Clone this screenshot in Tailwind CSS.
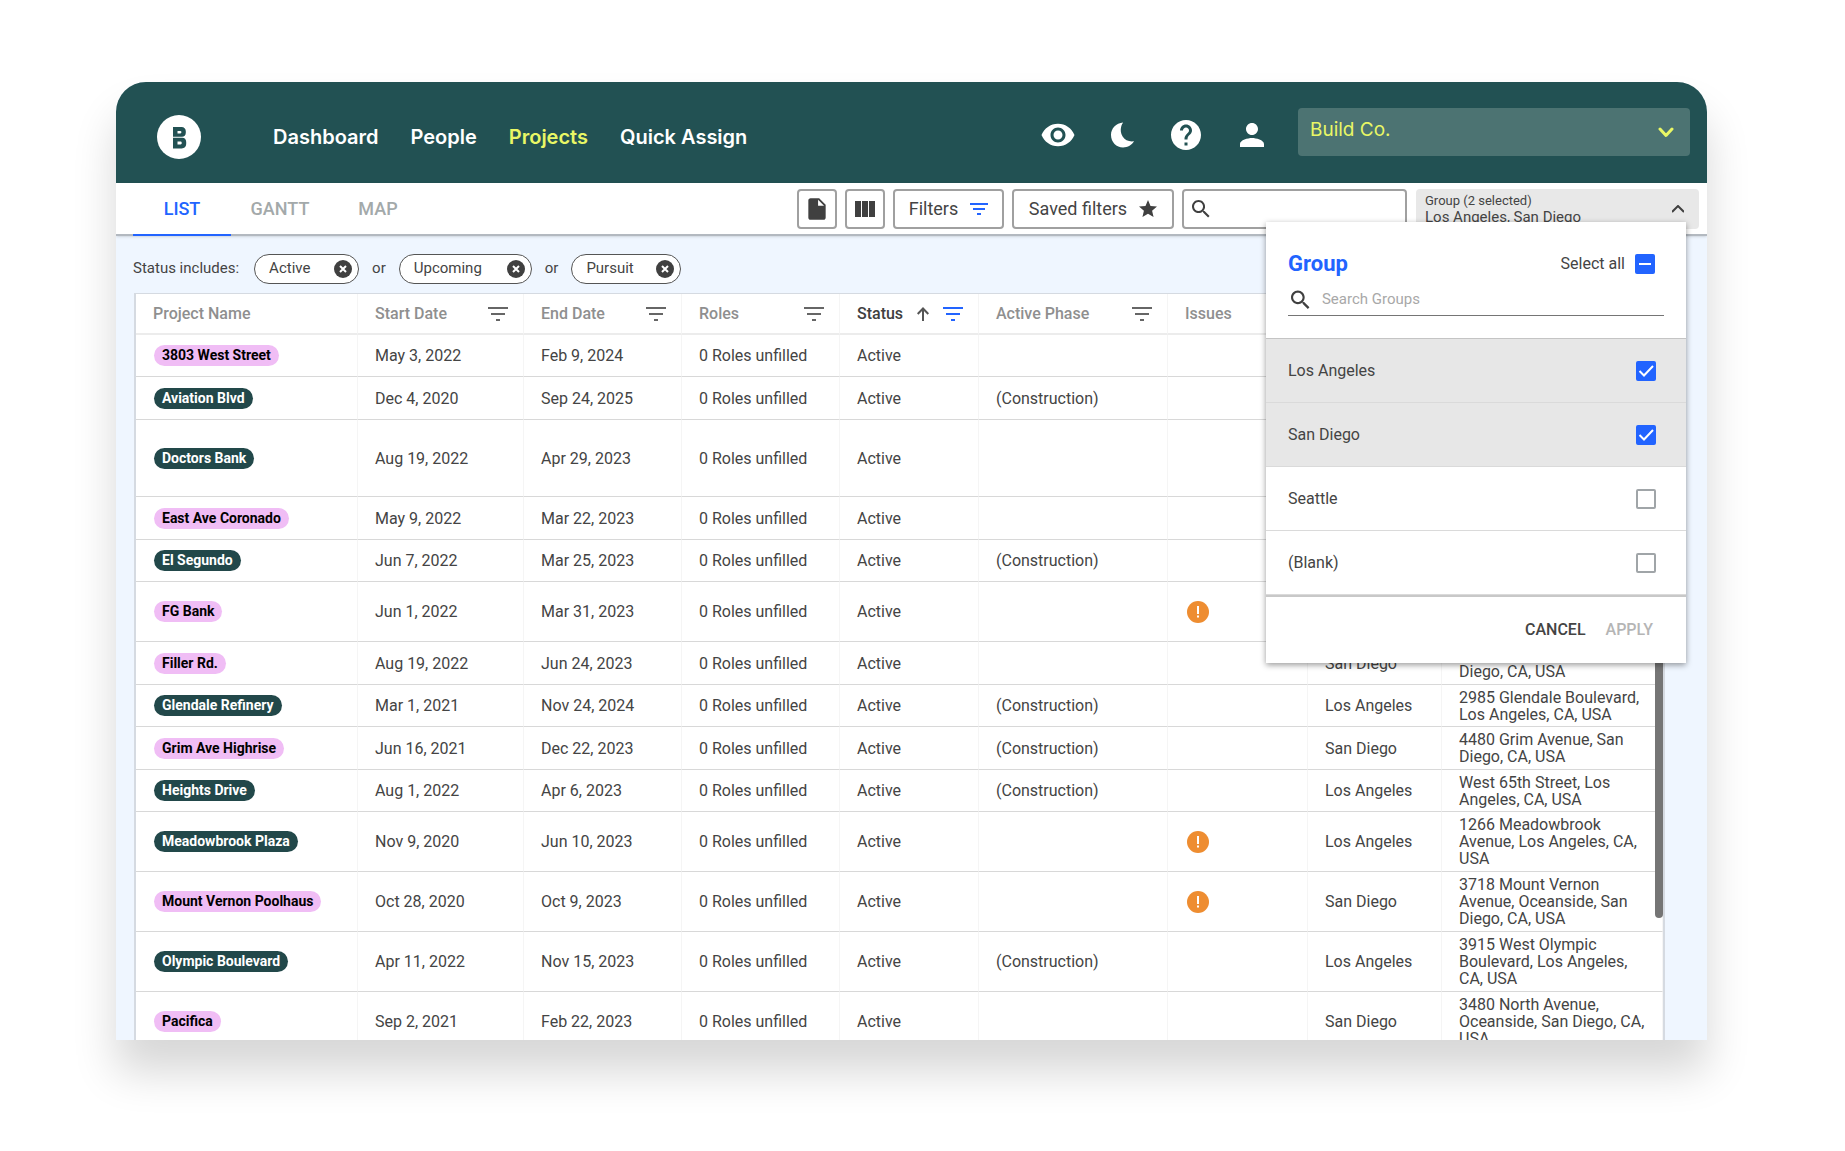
<!DOCTYPE html>
<html lang="en">
<head>
    <meta charset="UTF-8">
    <meta name="viewport" content="width=device-width, initial-scale=1.0">
    <title>Projects | Build Co.</title>
    <script src="https://cdn.jsdelivr.net/npm/@tailwindcss/browser@4"></script>
</head>
<body class="bg-white font-[Roboto,sans-serif] text-[#444]">

    <div class="flex h-screen pt-[82px] pr-[138px] pb-[111px] pl-[116px]">
        <div class="flex min-w-0 flex-1 flex-col overflow-hidden rounded-t-[30px] bg-[#eff6ff] shadow-[0_32px_44px_rgba(0,0,0,0.16)]">

            <!-- Top bar -->
            <header class="flex h-[101px] shrink-0 items-center bg-[#225153] pt-2 pr-[17px] pl-[41px]">
                <a href="#" aria-label="Home" class="mr-[72px]">
                    <svg class="size-11" viewBox="0 0 44 44">
                        <circle cx="22" cy="22" r="22" fill="#fff"/>
                        <path fill="#225153" fill-rule="evenodd" d="M16 12h8.500c2.600 0 4.300 1.700 4.300 4.200v1.600c0 2.400-1.600 4-3.800 4h-9zM20.500 16v2.400h2.800c1.500 0 1.500-2.400 0-2.400zM16 22.800h9.200c2.400 0 4 1.600 4 4.100v2.100c0 2.600-1.800 4.400-4.500 4.400H16zM20.500 26.600v2.900h3c1.700 0 1.700-2.900 0-2.900z"/>
                    </svg>
                </a>
                <nav class="flex flex-1 gap-8 font-[Inter,sans-serif] text-xl font-semibold text-white">
                    <a href="#">Dashboard</a>
                    <a href="#">People</a>
                    <a href="#" class="text-[#e9f765]">Projects</a>
                    <a href="#">Quick Assign</a>
                </nav>
                <div class="-mt-1 flex items-center gap-[30px] text-white">
                    <button aria-label="Watch"><svg class="size-9" viewBox="0 0 24 24" fill="currentColor"><path d="M12 4.500C7 4.500 2.730 7.610 1 12c1.730 4.390 6 7.500 11 7.500s9.270-3.110 11-7.500c-1.730-4.390-6-7.500-11-7.500zM12 17c-2.760 0-5-2.240-5-5s2.240-5 5-5 5 2.240 5 5-2.240 5-5 5zm0-8c-1.660 0-3 1.340-3 3s1.340 3 3 3 3-1.340 3-3-1.340-3-3-3z"/></svg></button>
                    <button aria-label="Dark mode"><svg class="size-8" viewBox="-2 -2 32 32" fill="currentColor"><path d="M15.200 1.500C8 2 3 7.500 3 14c0 7 5.500 12.500 12 12.500 4.800 0 9-2.600 11-6.200-5 .700-9-1.200-11.200-4.500-2.800-4.300-2.700-10.300.400-14.300z"/></svg></button>
                    <button aria-label="Help"><svg class="size-9" viewBox="0 0 24 24" fill="currentColor"><path d="M12 2C6.480 2 2 6.480 2 12s4.480 10 10 10 10-4.480 10-10S17.520 2 12 2zm1 17h-2v-2h2v2zm2.070-7.750l-.9.920C13.450 12.900 13 13.500 13 15h-2v-.5c0-1.100.45-2.100 1.170-2.830l1.240-1.260c.37-.36.590-.86.590-1.410 0-1.100-.9-2-2-2s-2 .9-2 2H8c0-2.210 1.790-4 4-4s4 1.790 4 4c0 .88-.36 1.680-.93 2.250z"/></svg></button>
                    <button aria-label="Account"><svg class="size-9" viewBox="0 0 24 24" fill="currentColor"><path d="M12 12c2.210 0 4-1.790 4-4s-1.790-4-4-4-4 1.790-4 4 1.790 4 4 4zm0 2c-2.670 0-8 1.340-8 4v2h16v-2c0-2.660-5.330-4-8-4z"/></svg></button>
                </div>
                <div class="relative -mt-2.5 ml-7">
                    <select aria-label="Company" class="h-12 w-[392px] appearance-none rounded bg-[#4c7372] px-3 pb-0.5 font-[Inter,sans-serif] text-[19px] text-[#e9f765]">
                        <option>Build Co.</option>
                    </select>
                    <svg class="pointer-events-none absolute top-4 right-4 size-4" viewBox="0 0 16 16" fill="none" stroke="#e9f765" stroke-width="3" stroke-linecap="round" stroke-linejoin="round"><path d="M2 5l6 6.500L14 5"/></svg>
                </div>
            </header>

            <!-- View tabs and tools -->
            <div class="relative z-10 flex h-[53px] shrink-0 items-start border-b-2 border-[#b3b9c0] bg-white pr-2 pl-[17px] shadow-sm">
                <nav class="flex flex-1 text-lg font-medium text-[#a3a9aa]">
                    <a href="#" class="flex h-[53px] w-[98px] items-center justify-center border-b-2 border-[#2264ff] text-[#2264ff]">LIST</a>
                    <a href="#" class="flex h-[53px] w-[98px] items-center justify-center pb-0.5">GANTT</a>
                    <a href="#" class="flex h-[53px] w-[98px] items-center justify-center pb-0.5">MAP</a>
                </nav>
                <div class="flex gap-2 pt-[6px] text-lg">
                    <button aria-label="Export" class="flex size-10 items-center justify-center rounded border-2 border-[#a0a0a0]"><svg class="size-[26px]" viewBox="0 0 24 24" fill="#404040"><path d="M6 2c-1.100 0-2 .9-2 2v16c0 1.100.9 2 2 2h12c1.100 0 2-.9 2-2V8l-6-6H6zm7 7V3.500L18.500 9H13z"/></svg></button>
                    <button aria-label="Columns" class="flex size-10 items-center justify-center rounded border-2 border-[#a0a0a0]"><svg class="h-4 w-5" viewBox="0 0 20 16" fill="#404040"><path d="M0 0h6v16H0zM7 0h6v16H7zM14 0h6v16h-6z"/></svg></button>
                    <button class="flex h-10 w-[111px] items-center justify-center gap-3 rounded border-2 border-[#a0a0a0]">Filters <svg class="h-3 w-[18px]" viewBox="0 0 18 12" fill="#2264ff"><path d="M0 0h18v2H0zM3 5h12v2H3zM7 10h4v2H7z"/></svg></button>
                    <button class="flex h-10 w-[162px] items-center justify-center gap-3 rounded border-2 border-[#a0a0a0]">Saved filters <svg class="size-[18px]" viewBox="2 2 20 20" fill="#404040"><path d="M12 17.270L18.180 21l-1.640-7.030L22 9.240l-7.190-.61L12 2 9.190 8.630 2 9.240l5.460 4.730L5.820 21z"/></svg></button>
                    <label class="flex h-10 w-[225px] items-center rounded border-2 border-[#a0a0a0] px-2">
                        <svg class="size-5" viewBox="3 3 18 18" fill="#404040"><path d="M15.500 14h-.79l-.28-.27C15.410 12.590 16 11.110 16 9.500 16 5.910 13.090 3 9.500 3S3 5.910 3 9.500 5.910 16 9.500 16c1.610 0 3.090-.59 4.230-1.570l.27.28v.79l5 4.990L20.490 19l-4.990-5zm-6 0C7.010 14 5 11.990 5 9.500S7.010 5 9.500 5 14 7.010 14 9.500 11.990 14 9.500 14z"/></svg>
                        <input type="text" aria-label="Search projects" class="w-full min-w-0 px-2 outline-none">
                    </label>

                    <div class="relative ml-px">
                        <button class="flex h-10 w-[283px] items-center rounded bg-[#e8e8e8] pr-[15px] pl-[9px] text-left text-[15px] leading-[17px]">
                            <span class="flex-1"><span class="block text-[13px] leading-[17px]">Group (2 selected)</span>Los Angeles, San Diego</span>
                            <svg class="h-2 w-3" viewBox="0 0 12 8" fill="none" stroke="#404040" stroke-width="2"><path d="M0 7l6-6 6 6"/></svg>
                        </button>

                        <!-- Group filter menu -->
                        <div class="absolute top-[33px] right-[13px] w-[420px] bg-white text-base shadow-[0_2px_6px_rgba(0,0,0,0.4)]">
                            <div class="h-[117px] border-b border-[#c4c4c4] px-[22px] pt-[30px]">
                                <div class="flex items-center justify-between pr-[9px]">
                                    <h2 class="text-[22px] leading-6 font-bold text-[#2264ff]">Group</h2>
                                    <label class="flex items-center gap-[10px]">Select all
                                        <span class="grid size-5">
                                            <input type="checkbox" checked class="col-start-1 row-start-1 size-5 appearance-none rounded-xs bg-[#2264ff]">
                                            <svg class="pointer-events-none col-start-1 row-start-1 size-5" viewBox="0 0 20 20"><path d="M4 9h12v2H4z" fill="#fff"/></svg>
                                        </span>
                                    </label>
                                </div>
                                <label class="mt-2 flex h-8 items-center border-b border-[#757575] pl-[3px] text-[15px]">
                                    <svg class="size-5" viewBox="3 3 18 18" fill="#404040"><path d="M15.500 14h-.79l-.28-.27C15.410 12.590 16 11.110 16 9.500 16 5.910 13.090 3 9.500 3S3 5.910 3 9.500 5.910 16 9.500 16c1.610 0 3.090-.59 4.230-1.570l.27.28v.79l5 4.990L20.490 19l-4.990-5zm-6 0C7.010 14 5 11.990 5 9.500S7.010 5 9.500 5 14 7.010 14 9.500 11.990 14 9.500 14z"/></svg>
                                    <input type="text" aria-label="Search groups" placeholder="Search Groups" class="w-full pl-3 outline-none placeholder:text-[#a8a8a8]">
                                </label>
                            </div>
                            <div id="groupList"></div>
                            <div class="flex h-[68px] items-center justify-end gap-5 border-t-2 border-[#c8c8c8] pr-[33px] font-medium">
                                <button>CANCEL</button>
                                <button disabled class="text-[#b5b5b5]">APPLY</button>
                            </div>
                        </div>
                    </div>
                </div>
            </div>

            <!-- Active filters -->
            <div class="flex h-[57px] shrink-0 items-center gap-[13px] pl-[17px] pt-2 text-[15px]">
                <span class="mr-0.5">Status includes:</span>
                <span class="flex h-[30px] w-[105px] items-center justify-between rounded-full border border-[#555] bg-white pr-[6px] pl-[14px]">Active <button aria-label="Remove Active"><svg class="block size-[18px]" viewBox="0 0 18 18"><circle cx="9" cy="9" r="9" fill="#404040"/><path d="M6 6l6 6M12 6l-6 6" stroke="#fff" stroke-width="2"/></svg></button></span>
                <span>or</span>
                <span class="flex h-[30px] w-[133px] items-center justify-between rounded-full border border-[#555] bg-white pr-[6px] pl-[14px]">Upcoming <button aria-label="Remove Upcoming"><svg class="block size-[18px]" viewBox="0 0 18 18"><circle cx="9" cy="9" r="9" fill="#404040"/><path d="M6 6l6 6M12 6l-6 6" stroke="#fff" stroke-width="2"/></svg></button></span>
                <span>or</span>
                <span class="flex h-[30px] w-[110px] items-center justify-between rounded-full border border-[#555] bg-white pr-[6px] pl-[14px]">Pursuit <button aria-label="Remove Pursuit"><svg class="block size-[18px]" viewBox="0 0 18 18"><circle cx="9" cy="9" r="9" fill="#404040"/><path d="M6 6l6 6M12 6l-6 6" stroke="#fff" stroke-width="2"/></svg></button></span>
            </div>

            <!-- Projects -->
            <div class="relative mr-[42px] ml-[18px] min-h-0 flex-1 overflow-hidden border-x-2 border-t border-[#d5dae1] bg-white">
                <table class="w-full table-fixed border-separate border-spacing-0 text-base leading-[17px]">
                    <colgroup>
                        <col class="w-[222px]"><col class="w-[166px]"><col class="w-[158px]"><col class="w-[158px]"><col class="w-[139px]"><col class="w-[189px]"><col class="w-[140px]"><col class="w-[134px]"><col>
                    </colgroup>
                    <thead><tr id="headRow" class="h-[41px]"></tr></thead>
                    <tbody id="projectRows"></tbody>
                </table>
                <div class="absolute top-0 right-0 h-[624px] w-2 rounded-full bg-[#757575]"></div>
            </div>
        </div>
    </div>

    <script>
        const columns = [
            { name: "Project Name" },
            { name: "Start Date", filter: true },
            { name: "End Date", filter: true },
            { name: "Roles", filter: true },
            { name: "Status", filter: true, sorted: true },
            { name: "Active Phase", filter: true },
            { name: "Issues" },
            { name: "" },
            { name: "" }
        ];

        const tall = "h-[77px]", mid = "h-[60px]", even = "h-[42px]", odd = "h-[43px]";
        const pink = "bg-[#f0bdf5] text-black", dark = "bg-[#22484a] text-white";

        const projects = [
            [even, pink, "3803 West Street", "May 3, 2022", "Feb 9, 2024", "", false, "", ""],
            [odd, dark, "Aviation Blvd", "Dec 4, 2020", "Sep 24, 2025", "(Construction)", false, "", ""],
            [tall, dark, "Doctors Bank", "Aug 19, 2022", "Apr 29, 2023", "", false, "", ""],
            [odd, pink, "East Ave Coronado", "May 9, 2022", "Mar 22, 2023", "", false, "", ""],
            [even, dark, "El Segundo", "Jun 7, 2022", "Mar 25, 2023", "(Construction)", false, "", ""],
            [mid, pink, "FG Bank", "Jun 1, 2022", "Mar 31, 2023", "", true, "", ""],
            [odd, pink, "Filler Rd.", "Aug 19, 2022", "Jun 24, 2023", "", false, "San Diego", "<br>Diego, CA, USA"],
            [even, dark, "Glendale Refinery", "Mar 1, 2021", "Nov 24, 2024", "(Construction)", false, "Los Angeles", "2985 Glendale Boulevard, Los Angeles, CA, USA"],
            [odd, pink, "Grim Ave Highrise", "Jun 16, 2021", "Dec 22, 2023", "(Construction)", false, "San Diego", "4480 Grim Avenue, San Diego, CA, USA"],
            [even, dark, "Heights Drive", "Aug 1, 2022", "Apr 6, 2023", "(Construction)", false, "Los Angeles", "West 65th Street, Los Angeles, CA, USA"],
            [mid, dark, "Meadowbrook Plaza", "Nov 9, 2020", "Jun 10, 2023", "", true, "Los Angeles", "1266 Meadowbrook Avenue, Los Angeles, CA, USA"],
            [mid, pink, "Mount Vernon Poolhaus", "Oct 28, 2020", "Oct 9, 2023", "", true, "San Diego", "3718 Mount Vernon Avenue, Oceanside, San Diego, CA, USA"],
            [mid, dark, "Olympic Boulevard", "Apr 11, 2022", "Nov 15, 2023", "(Construction)", false, "Los Angeles", "3915 West Olympic Boulevard, Los Angeles, CA, USA"],
            [mid, pink, "Pacifica", "Sep 2, 2021", "Feb 22, 2023", "", false, "San Diego", "3480 North Avenue, Oceanside, San Diego, CA, USA"]
        ];

        const groups = [["Los Angeles", true], ["San Diego", true], ["Seattle", false], ["(Blank)", false]];

        const issueIcon = `<svg class="ml-0.5 block size-[22px]" viewBox="0 0 22 22" role="img" aria-label="Issue"><circle cx="11" cy="11" r="11" fill="#ee8d31"/><path d="M10 5h2v8h-2zM10 14.500h2v2h-2z" fill="#fff"/></svg>`;

        document.getElementById('headRow').innerHTML = columns.map(c => `
            <th class="border-r border-b-2 border-r-[#f5f5f5] border-b-[#ececec] pr-[15px] pl-[17px] text-left font-medium ${c.sorted ? 'text-[#404040]' : 'text-[#8f8f8f]'}">
                <div class="flex items-center justify-between">
                    <span>${c.name}</span>
                    ${c.sorted ? '<svg class="h-[14px] w-3" viewBox="0 0 12 14" fill="none" stroke="#555" stroke-width="2"><path d="M6 14V1.500M.700 7L6 1.500 11.300 7"/></svg>' : ''}
                    ${c.filter ? `<button aria-label="Filter ${c.name}" class="${c.sorted ? 'text-[#2264ff]' : 'text-[#666]'}"><svg class="block h-[14px] w-5" viewBox="0 0 20 14" fill="currentColor"><path d="M0 0h20v2H0zM3 6h14v2H3zM8 12h4v2H8z"/></svg></button>` : ''}
                </div>
            </th>
        `).join('');

        document.getElementById('projectRows').innerHTML = projects.map(([height, pill, name, start, end, phase, issue, group, address]) => {
            const cells = [
                `<a href="#" class="ml-px inline-block rounded-full px-2 align-middle text-sm leading-[21px] font-bold ${pill}">${name}</a>`,
                start, end, "0 Roles unfilled", "Active", phase, issue ? issueIcon : "", group, address
            ];
            return `<tr class="${height}">${cells.map(c => `<td class="border-r border-b border-r-[#f5f5f5] border-b-[#d8d8d8] pl-[17px] pr-4">${c}</td>`).join('')}</tr>`;
        }).join('');

        document.getElementById('groupList').innerHTML = groups.map(([name, on]) => `
            <label class="flex h-16 items-center justify-between border-b border-[#dadada] pr-[30px] pl-[22px] ${on ? 'bg-[#e7e7e7]' : 'bg-white'}">${name}
                <span class="grid size-5">
                    <input type="checkbox" ${on ? 'checked' : ''} class="col-start-1 row-start-1 size-5 appearance-none rounded-xs border-2 border-[#a0a5a8] bg-white checked:border-[#2264ff] checked:bg-[#2264ff]">
                    ${on ? '<svg class="pointer-events-none col-start-1 row-start-1 size-5" viewBox="0 0 20 20" fill="none" stroke="#fff" stroke-width="2"><path d="M3.500 10l4.500 4.500L17 5"/></svg>' : ''}
                </span>
            </label>
        `).join('');
    </script>
</body>
</html>
